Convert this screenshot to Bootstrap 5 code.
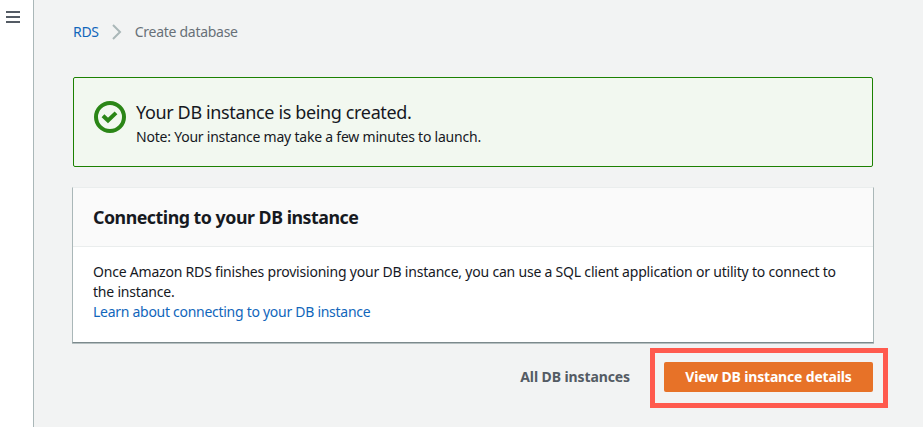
<!DOCTYPE html>
<html lang="en">
<head>
<meta charset="utf-8">
<meta name="viewport" content="width=device-width, initial-scale=1">
<title>Create database</title>
<link href="https://cdn.jsdelivr.net/npm/bootstrap@5.3.0/dist/css/bootstrap.min.css" rel="stylesheet">
<style>
body{font:14px/20px "Noto Sans","Open Sans",sans-serif;color:#16191f;background:#f2f3f3;letter-spacing:-.28px}
a{color:#1166bb;text-decoration:none}
.rail{width:34px;background:#fff;border-right:1px solid #aab7b8;padding:11px 0 0 6px}
.content-area{padding:22px 50px 0 39px}
.crumb-arrow{margin:0 13px}
.crumb-current{color:#687078}
.notice{height:90px;margin-top:35px;padding:23px 20px 0;background:#f2f8f0;border:1px solid #1d8102;border-radius:2px}
.notice-copy{margin:-1px 0 0 10px}
.notice-title{font-size:18px;line-height:24px;letter-spacing:-.36px}
.notice-note{margin-top:3px;letter-spacing:-.22px}
.panel{height:156px;margin:20px -1px 0;border:1px solid #aab7b8;border-top-color:#eaeded;border-bottom-color:#7c898c;border-radius:0;box-shadow:0 1px #b5bfc0}
.panel-head{height:59px;padding:18px 20px 0;background:#fafafa;border-bottom:1px solid #eaeded;font-size:17.8px;line-height:22px;font-weight:700;letter-spacing:-.48px}
.panel-text{padding:15px 20px 0}
.panel-lead{letter-spacing:-.205px}
.actions{margin-right:-15px;margin-top:5px}
.btn-plain,.btn-orange{font-size:14px;line-height:20px;font-weight:700;border:0;padding:4px 20px 6px;border-radius:2px;letter-spacing:-.1px}
.btn-plain{color:#545b64}
.btn-orange{background:#e77228;color:#fff;width:209px;height:30px;padding:5px 0;letter-spacing:-.17px}
.highlight{border:5px solid #ff5a4e;width:238px;height:60px;padding:9px}
</style>
<script src="https://cdn.jsdelivr.net/npm/bootstrap@5.3.0/dist/js/bootstrap.bundle.min.js"></script>
</head>
<body>
<div class="d-flex vh-100 overflow-hidden">
  <aside class="rail flex-shrink-0">
    <svg class="d-block" width="14" height="12" role="img" aria-label="Menu"><path d="M0 1h14M0 6h14M0 11h14" stroke="#545b64" stroke-width="2"/></svg>
  </aside>
  <main class="content-area flex-grow-1">
    <nav class="d-flex align-items-center" aria-label="Breadcrumb">
      <a href="#">RDS</a>
      <svg class="crumb-arrow" width="10" height="16" viewBox="0 0 10 16" fill="none"><path d="M1 1l7 7-7 7" stroke="#aab7b8" stroke-width="2"/></svg>
      <span class="crumb-current">Create database</span>
    </nav>
    <section class="notice d-flex" role="status">
      <svg class="flex-shrink-0" width="32" height="32" viewBox="0 0 32 32" fill="none" stroke="#2b8617" stroke-width="4"><circle cx="16" cy="16" r="14"/><path d="M9 14.7l5 4.8 8-7.6"/></svg>
      <div class="notice-copy">
        <div class="notice-title">Your DB instance is being created.</div>
        <div class="notice-note">Note: Your instance may take a few minutes to launch.</div>
      </div>
    </section>
    <section class="panel card">
      <div class="panel-head">Connecting to your DB instance</div>
      <div class="panel-text text-nowrap"><span class="panel-lead">Once Amazon RDS finishes provisioning your DB instance, you can use a SQL client application or utility to connect to<br>the instance.</span><br><a href="#">Learn about connecting to your DB instance</a></div>
    </section>
    <div class="actions d-flex justify-content-end align-items-center">
      <button class="btn btn-plain">All DB instances</button>
      <div class="highlight"><button class="btn btn-orange d-block">View DB instance details</button></div>
    </div>
  </main>
</div>
</body>
</html>
